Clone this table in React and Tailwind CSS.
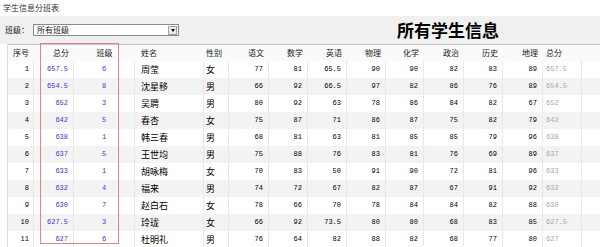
import React from 'react'

const rows = [
  [1, '657.5', 6, '周莹', '女', 77, 81, '65.5', 90, 90, 82, 83, 89],
  [2, '654.5', 8, '沈星移', '男', 66, 92, '66.5', 97, 82, 86, 76, 89],
  [3, '652', 3, '吴聘', '男', 80, 92, 63, 78, 86, 84, 82, 67],
  [4, '642', 5, '春杏', '女', 75, 87, 71, 86, 87, 75, 82, 79],
  [5, '638', 1, '韩三春', '男', 68, 81, 63, 81, 85, 85, 79, 96],
  [6, '637', 5, '王世均', '男', 75, 88, 76, 83, 81, 76, 69, 89],
  [7, '633', 1, '胡咏梅', '女', 70, 83, 50, 91, 90, 72, 81, 96],
  [8, '632', 4, '福来', '男', 74, 72, 67, 82, 87, 67, 91, 92],
  [9, '630', 7, '赵白石', '女', 78, 66, 70, 78, 84, 84, 82, 88],
  [10, '627.5', 3, '玲珑', '女', 66, 92, '73.5', 80, 80, 68, 83, 85],
  [11, '627', 6, '杜明礼', '男', 76, 64, 82, 88, 82, 68, 77, 80],
]

const subjects = ['语文', '数学', '英语', '物理', '化学', '政治', '历史', '地理']

const cols =
  'grid grid-cols-[26px_40px_61px_69px_25px_40px_39px_39px_39px_38px_40px_39px_40px_39px_1fr]'
const cjk = "font-['Noto_Sans_CJK_SC',sans-serif]"
const mono = "font-['Liberation_Mono',monospace] text-[7px]"
const cell = 'border-r border-[#e8e8e8] h-[17px] leading-[17px] overflow-hidden whitespace-nowrap'

export default function App() {
  return (
    <div className={`relative w-[600px] h-[247px] overflow-hidden bg-white ${cjk} text-[#222]`}>
      {/* window title */}
      <div className="h-[16px] pl-[3px] text-[8px] leading-[16px] text-[#333]">学生信息分班表</div>

      {/* filter bar */}
      <div className="flex items-center h-[28px] bg-[#f0f0f0] pl-[5px]">
        <span className="text-[8px]">班级：</span>
        <div className="ml-[4px] flex items-center justify-between w-[146px] h-[12px] bg-white border border-[#8a8a8a] pl-[3px] pr-[1px]">
          <span className="text-[8px] leading-none">所有班级</span>
          <div className="flex items-center justify-center w-[9px] h-[9px] bg-[#ececec] border border-[#a0a0a0]">
            <div className="w-0 h-0 border-l-[2.5px] border-r-[2.5px] border-t-[3px] border-l-transparent border-r-transparent border-t-black" />
          </div>
        </div>
        <span className="ml-[218px] text-[17px] font-bold text-black">所有学生信息</span>
      </div>

      {/* table */}
      <div className="ml-[7px] border-l border-[#dcdcdc]">
        <div className={`${cols} h-[17px] border-t border-[#c4c4c4] bg-[#fafafa] text-[8px] leading-[16px] text-[#222]`}>
          <div className="text-center">序号</div>
          <div className="text-right pr-[5px]">总分</div>
          <div className="text-center">班级</div>
          <div className="pl-[6px]">姓名</div>
          <div className="pl-[2px]">性别</div>
          {subjects.map((s) => (
            <div key={s} className="text-right pr-[5px]">{s}</div>
          ))}
          <div className="pl-[3px]">总分</div>
          <div />
        </div>

        {rows.map((r, i) => (
          <div key={r[0]} className={`${cols} ${i % 2 === 1 ? 'bg-[#f3f3f3]' : 'bg-white'}`}>
            <div className={`${cell} ${mono} text-right pr-[4px] text-black`}>{r[0]}</div>
            <div className={`${cell} ${mono} text-right pr-[5px] text-[#3a3ad0]`}>{r[1]}</div>
            <div className={`${cell} ${mono} text-center text-[#3a3ad0]`}>{r[2]}</div>
            <div className={`${cell} text-[9px] pl-[6px] text-black`}>{r[3]}</div>
            <div className={`${cell} text-[9px] pl-[2px] text-black`}>{r[4]}</div>
            {r.slice(5).map((v, j) => (
              <div key={j} className={`${cell} ${mono} text-right pr-[5px] text-black`}>{v}</div>
            ))}
            <div className={`${cell} ${mono} pl-[3px] text-[#a8a8a8]`}>{r[1]}</div>
            <div className="h-[17px]" />
          </div>
        ))}
      </div>

      {/* highlight box over 总分 / 班级 */}
      <div className="absolute left-[40px] top-[43px] w-[79px] h-[201px] border border-[#e08585] pointer-events-none" />
    </div>
  )
}
